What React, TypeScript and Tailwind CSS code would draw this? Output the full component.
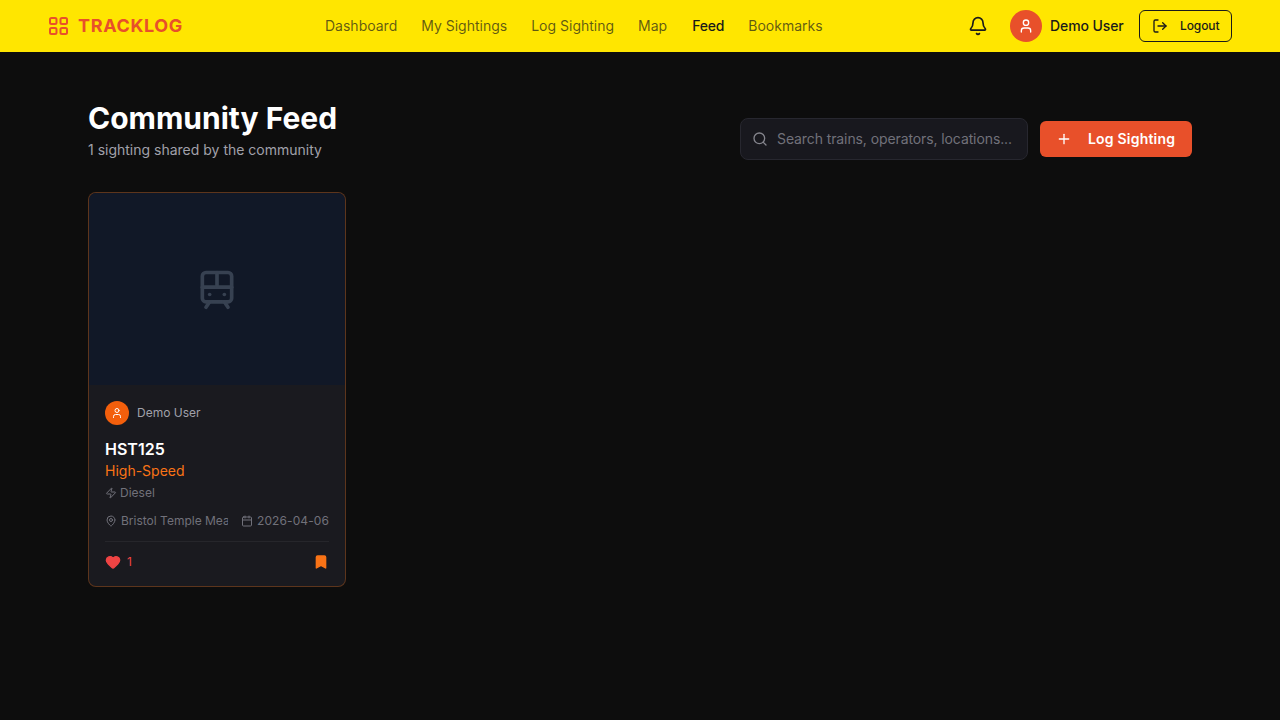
import { Bell, Bookmark, Calendar, Heart, LogOut, MapPin, Plus, Search, TramFront, User, Zap } from "lucide-react";

const links = ["Dashboard", "My Sightings", "Log Sighting", "Map", "Feed", "Bookmarks"];

function Logo() {
  return (
    <svg width="22" height="22" viewBox="0 0 22 22" fill="none" stroke="#e8502a" strokeWidth="2">
      <rect x="2" y="3" width="6.5" height="6" rx="1.5" />
      <rect x="12.5" y="3" width="6.5" height="6" rx="1.5" />
      <rect x="2" y="13" width="6.5" height="6" rx="1.5" />
      <rect x="12.5" y="13" width="6.5" height="6" rx="1.5" />
    </svg>
  );
}

export default function App() {
  return (
    <div className="min-h-screen bg-[#0d0d0d] font-['Inter',sans-serif] antialiased">
      <header className="h-[52px] bg-[#ffe600] px-12 flex items-center">
        <div className="w-[277px] flex items-center gap-2">
          <Logo />
          <span className="text-lg font-bold tracking-[0.65px] text-[#e8502a]">TRACKLOG</span>
        </div>
        <nav className="flex-1 flex items-center gap-6 text-sm">
          {links.map((l) => (
            <span key={l} className={l === "Feed" ? "ml-px font-medium tracking-[-0.2px] text-[#1a1a1a]" : "text-[#1a1a1a]/70"}>{l}</span>
          ))}
        </nav>
        <div className="flex items-center">
          <Bell size={20} className="text-[#1a1a1a] mr-[22px]" />
          <div className="w-8 h-8 rounded-full bg-[#e8502a] flex items-center justify-center mr-2">
            <User size={16} className="text-white" />
          </div>
          <span className="w-[73px] whitespace-nowrap text-sm font-medium tracking-[-0.1px] text-[#1a1a1a] mr-4">Demo User</span>
          <button className="h-8 w-[93px] rounded-md border border-[#1a1a1a] flex items-center pl-3 gap-3 text-xs font-medium tracking-[-0.1px] text-[#1a1a1a]">
            <LogOut size={16} />
            Logout
          </button>
        </div>
      </header>
      <main className="px-[88px] pt-12">
        <div className="flex items-end justify-between mb-8">
          <div>
            <h1 className="text-3xl font-bold text-white">Community Feed</h1>
            <p className="text-sm text-[#a1a1aa] mt-1">1 sighting shared by the community</p>
          </div>
          <div className="flex items-center gap-3">
            <div className="w-[288px] h-[42px] rounded-lg border border-[#27272f] bg-[#18181e] flex items-center pl-[11px] gap-[9px]">
              <Search size={16} className="text-[#85858d] shrink-0" />
              <input
                readOnly
                placeholder="Search trains, operators, locations..."
                className="min-w-0 flex-1 bg-transparent text-sm tracking-[-0.1px] text-white placeholder:text-[#71717a] outline-none"
              />
            </div>
            <button className="w-[152px] h-9 rounded-md bg-[#e8502a] flex items-center pl-4 gap-4 text-sm font-semibold tracking-[0.2px] text-white">
              <Plus size={16} />
              Log Sighting
            </button>
          </div>
        </div>
        <div className="grid grid-cols-4 gap-6">
          <article className="rounded-lg border border-[#f97316]/30 bg-[#1a1a1f] overflow-hidden">
            <div className="h-48 bg-[#111827] flex items-center justify-center">
              <TramFront size={44} className="text-[#374151]" />
            </div>
            <div className="p-4">
              <div className="flex items-center gap-2">
                <div className="w-6 h-6 rounded-full bg-[#f35f0c] flex items-center justify-center">
                  <User size={12} className="text-white" />
                </div>
                <span className="text-xs text-[#a1a1aa]">Demo User</span>
              </div>
              <h3 className="mt-3 text-base font-semibold text-white">HST125</h3>
              <p className="text-sm text-[#f97316]">High-Speed</p>
              <div className="mt-1 flex items-center gap-[3px] text-xs text-[#71717a]">
                <Zap size={12} />
                <span>Diesel</span>
              </div>
              <div className="mt-3 flex items-center gap-[13px] text-xs text-[#71717a]">
                <div className="flex items-center gap-1 min-w-0 flex-1">
                  <MapPin size={12} className="shrink-0" />
                  <span className="whitespace-nowrap overflow-hidden">Bristol Temple Meads</span>
                </div>
                <div className="w-[88px] flex items-center gap-1 shrink-0">
                  <Calendar size={12} className="shrink-0" />
                  <span className="whitespace-nowrap tracking-[0.1px]">2026-04-06</span>
                </div>
              </div>
              <div className="mt-3 pt-3 border-t border-[#26262b] flex items-center justify-between">
                <div className="flex items-center gap-1.5 text-xs text-[#ef4444]">
                  <Heart size={16} className="fill-[#ef4444]" />
                  <span>1</span>
                </div>
                <Bookmark size={16} className="text-[#f97316] fill-[#f97316]" />
              </div>
            </div>
          </article>
        </div>
      </main>
    </div>
  );
}
